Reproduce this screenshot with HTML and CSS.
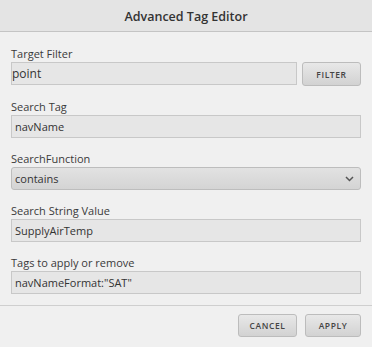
FILE: index.html
```html
<!DOCTYPE html>
<html>
<head>
<meta charset="utf-8">
<link rel="stylesheet" href="styles.css">
</head>
<body>
<div class="dialog">
  <div class="header">Advanced Tag Editor</div>
  <div class="body">
    <div class="field">
      <div class="label">Target Filter</div>
      <div class="row">
        <div class="input input-flush">point</div>
        <div class="btn btn-filter">FILTER</div>
      </div>
    </div>
    <div class="field">
      <div class="label">Search Tag</div>
      <div class="input">navName</div>
    </div>
    <div class="field">
      <div class="label">SearchFunction</div>
      <div class="select">
        <span>contains</span>
        <svg class="chev" width="9" height="6" viewBox="0 0 9 6"><path d="M1 1 L4.5 4.5 L8 1" fill="none" stroke="#555" stroke-width="1.5"/></svg>
      </div>
    </div>
    <div class="field">
      <div class="label">Search String Value</div>
      <div class="input">SupplyAirTemp</div>
    </div>
    <div class="field">
      <div class="label">Tags to apply or remove</div>
      <div class="input">navNameFormat:"SAT"</div>
    </div>
  </div>
  <div class="footer">
    <div class="btn btn-cancel">CANCEL</div>
    <div class="btn btn-apply">APPLY</div>
  </div>
</div>
</body>
</html>
```
FILE: styles.css
```css
html, body {
  margin: 0;
  padding: 0;
  background: #f0f0f0;
}
.dialog {
  width: 372px;
  height: 347px;
  font-family: "Open Sans", "DejaVu Sans", sans-serif;
  color: #333;
  background: #f0f0f0;
  display: flex;
  flex-direction: column;
}
.header {
  height: 32px;
  box-sizing: border-box;
  background: #e4e4e4;
  border-bottom: 1px solid #c4c4c4;
  display: flex;
  align-items: center;
  justify-content: center;
  font-weight: 600;
  font-size: 12.5px;
  color: #333;
  padding-top: 1px;
}
.body {
  padding: 14px 11px 11px 11px;
  display: flex;
  flex-direction: column;
  gap: 13px;
  border-bottom: 1px solid #cfcfcf;
}
.field {
  display: flex;
  flex-direction: column;
}
.label {
  font-size: 11px;
  line-height: 16px;
  color: #3a3a3a;
}
.row {
  display: flex;
  gap: 5px;
}
.input {
  flex: 1;
  height: 23px;
  box-sizing: border-box;
  border: 1px solid #c8c8c8;
  background: #e6e6e6;
  font-size: 11px;
  line-height: 21px;
  padding: 0 3px;
  color: #333;
}
.input-flush {
  padding-left: 0;
  font-size: 12px;
}
.select {
  height: 23px;
  box-sizing: border-box;
  border: 1px solid #bdbdbd;
  border-radius: 3px;
  background: linear-gradient(#e2e2e2, #d4d4d4);
  font-size: 11px;
  line-height: 21px;
  padding: 0 6px 0 3px;
  display: flex;
  justify-content: space-between;
  align-items: center;
  color: #333;
}
.chev {
  display: block;
}
.btn {
  height: 24px;
  box-sizing: border-box;
  border: 1px solid #bcbcbc;
  border-radius: 3px;
  background: linear-gradient(#e8e8e8, #d2d2d2);
  font-size: 8.5px;
  font-weight: 600;
  letter-spacing: 0.6px;
  color: #444;
  display: flex;
  align-items: center;
  justify-content: center;
}
.btn-filter {
  width: 59px;
}
.footer {
  flex: 1;
  display: flex;
  justify-content: flex-end;
  align-items: flex-start;
  padding: 8px 11px 0 0;
  gap: 8px;
}
.btn-cancel {
  width: 59px;
  height: 23px;
}
.btn-apply {
  width: 56px;
  height: 23px;
}
```
